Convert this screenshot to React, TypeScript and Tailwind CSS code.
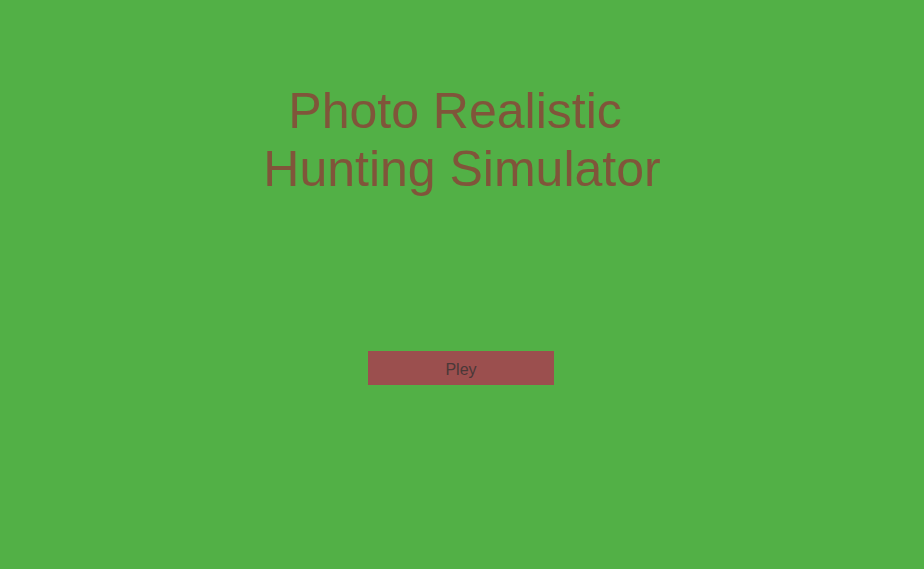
export default function App() {
  return (
    <div className="min-h-[569px] w-full bg-[#52b046] flex flex-col items-center pt-[82px] font-['Liberation_Sans',Arial,sans-serif]">
      <h1 className="text-center text-[50px] leading-[58px] font-normal text-[#80553a] whitespace-pre">
        <span className="block">{'Photo Realistic\u00a0'}</span>
        <span className="block">Hunting Simulator</span>
      </h1>
      <button className="mt-[153px] mr-[2px] w-[186px] h-[34px] pt-[3px] bg-[#9b4f4e] text-[16px] text-[#4a3838] flex items-center justify-center">
        Pley
      </button>
    </div>
  );
}
